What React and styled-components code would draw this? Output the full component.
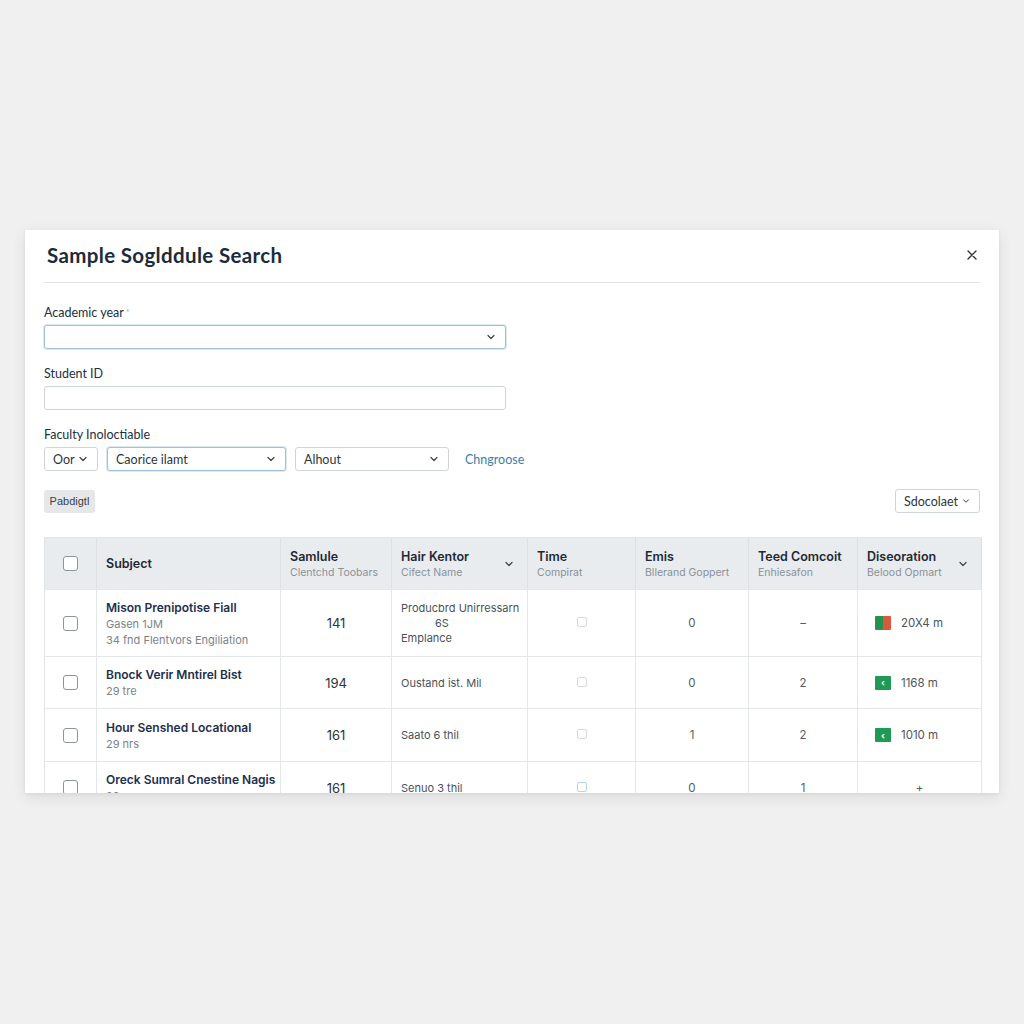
import React from 'react';
import styled, { createGlobalStyle } from 'styled-components';

const GlobalStyle = createGlobalStyle`
  html, body {
    margin: 0;
    padding: 0;
    background: #eff0ef;
  }
  body {
    font-family: Lato, "Open Sans", sans-serif;
    color: #1f2a37;
  }
`;

const Page = styled.div`
  width: 1024px;
  height: 1024px;
  padding: 230px 0 0 25px;
  box-sizing: border-box;
`;

const Card = styled.div`
  width: 974px;
  height: 563px;
  background: #fff;
  box-shadow: 0 4px 14px rgba(0, 0, 0, 0.09), 0 1px 3px rgba(0, 0, 0, 0.06);
  overflow: hidden;
  padding: 0 19px;
  box-sizing: border-box;
`;

const Header = styled.div`
  height: 52px;
  display: flex;
  align-items: center;
  justify-content: space-between;
  border-bottom: 1px solid #e3e6e8;
`;

const Title = styled.h1`
  margin: -2px 0 0 3px;
  font-size: 20.5px;
  font-weight: 700;
  color: #1c2b3b;
  letter-spacing: 0.35px;
`;

const Close = styled.button`
  border: none;
  background: none;
  padding: 0;
  margin: -2px 2px 0 0;
  display: flex;
  color: #333;
`;

const Form = styled.div`
  display: flex;
  flex-direction: column;
  padding-top: 22px;
`;

const Field = styled.div`
  display: flex;
  flex-direction: column;
  gap: 4px;
  margin-bottom: 17px;
`;

const Label = styled.label`
  font-size: 12.5px;
  line-height: 16px;
  color: #22303e;
`;

const Req = styled.span`
  color: #8fb5d3;
  font-size: 9px;
  vertical-align: top;
  margin-left: 2px;
`;

const Box = styled.div`
  width: ${p => p.$w}px;
  height: 24px;
  box-sizing: border-box;
  border: 1px solid ${p => (p.$focus ? '#9fc0d8' : '#cfd4d8')};
  box-shadow: ${p => (p.$focus ? '0 0 0 1px rgba(159,192,216,0.35)' : 'none')};
  border-radius: 3px;
  background: #fff;
  display: flex;
  align-items: center;
  justify-content: space-between;
  padding: 0 8px 0 8px;
  font-size: 12.5px;
  color: #2c3640;
`;

const Row = styled.div`
  display: flex;
  align-items: center;
  gap: 9px;
`;

const Link = styled.a`
  margin-left: 7px;
  color: #3c7ea6;
  font-size: 12.5px;
`;

const Toolbar = styled.div`
  display: flex;
  justify-content: space-between;
  align-items: center;
  margin-top: 1px;
  margin-bottom: 24px;
`;

const GrayButton = styled.button`
  height: 23px;
  width: 51px;
  border: none;
  border-radius: 3px;
  background: #e5e7e9;
  font-family: "Liberation Sans", sans-serif;
  font-size: 11px;
  color: #39424a;
  padding: 0;
`;

const Table = styled.div`
  width: 937px;
  border: 1px solid #e2e5e8;
  border-right: none;
  display: grid;
  grid-template-columns: 52px 184px 111px 136px 108px 113px 109px 124px;
  font-family: Inter, "Liberation Sans", sans-serif;
`;

const Th = styled.div`
  height: 51px;
  box-sizing: border-box;
  background: #e9ecef;
  border-right: 1px solid #dde1e5;
  display: flex;
  align-items: center;
  justify-content: ${p => (p.$center ? 'center' : 'space-between')};
  padding: 0 ${p => (p.$center ? 0 : 12)}px 0 ${p => (p.$center ? 0 : 9)}px;
`;

const ThText = styled.div`
  display: flex;
  flex-direction: column;
  gap: 2px;
`;

const ThMain = styled.span`
  font-size: 12.5px;
  font-weight: 600;
  color: #1f2833;
`;

const ThSub = styled.span`
  font-size: 10.5px;
  color: #8a9198;
`;

const Td = styled.div`
  height: ${p => p.$h}px;
  box-sizing: border-box;
  border-top: 1px solid #e4e7ea;
  border-right: 1px solid #e4e7ea;
  display: flex;
  align-items: center;
  justify-content: ${p => (p.$align === 'left' ? 'flex-start' : 'center')};
  padding-left: ${p => (p.$align === 'left' ? 9 : 0)}px;
  font-size: 12px;
  color: #3d454d;
`;

const Check = styled.span`
  width: 15px;
  height: 15px;
  box-sizing: border-box;
  border: 1.5px solid #8d949b;
  border-radius: 3px;
  background: #fff;
  display: inline-block;
`;

const MiniCheck = styled.span`
  width: 10px;
  height: 10px;
  box-sizing: border-box;
  border: 1px solid ${p => (p.$blue ? '#b5d3ea' : '#d5d9dd')};
  border-radius: 2px;
  display: inline-block;
  margin-top: -2px;
`;

const SubjectCell = styled.div`
  display: flex;
  flex-direction: column;
  gap: 2px;
`;

const SubjectTitle = styled.span`
  font-size: 12px;
  font-weight: 600;
  color: #1e3050;
`;

const SubjectSub = styled.span`
  font-size: 11px;
  color: #7b838b;
`;

const Multi = styled.div`
  display: flex;
  flex-direction: column;
  gap: 1px;
  font-size: 11px;
  color: #4a5259;
  line-height: 14px;
`;

const Indent = styled.span`
  padding-left: 34px;
`;

const Number = styled.span`
  font-size: ${p => (p.$big ? 13 : 11.5)}px;
  color: ${p => (p.$big ? '#2c3338' : '#555c63')};
`;

const Distance = styled.div`
  display: flex;
  align-items: center;
  gap: 10px;
  padding-left: 8px;
  font-size: 11.5px;
  color: #4d555c;
`;

const Badge = styled.span`
  width: 16px;
  height: 14px;
  border-radius: 1px;
  display: inline-flex;
  align-items: center;
  justify-content: center;
  background: ${p =>
    p.$mixed ? 'linear-gradient(90deg, #23934f 50%, #d9583e 50%)' : '#1f9a54'};
  color: #fff;
  font-size: 9px;
  font-weight: 700;
  line-height: 1;
`;

const Chevron = ({ size = 12 }) => (
  <svg width={size} height={size} viewBox="0 0 24 24" fill="none" stroke="#3a434c" strokeWidth="2.4" strokeLinecap="round" strokeLinejoin="round">
    <path d="M6 9l6 6 6-6" />
  </svg>
);

const columns = [
  { main: 'Samlule', sub: 'Clentchd Toobars' },
  { main: 'Hair Kentor', sub: 'Cifect Name', chevron: true },
  { main: 'Time', sub: 'Compirat' },
  { main: 'Emis', sub: 'Bllerand Goppert' },
  { main: 'Teed Comcoit', sub: 'Enhiesafon' },
  { main: 'Diseoration', sub: 'Belood Opmart', chevron: true },
];

const rows = [
  {
    h: 67,
    title: 'Mison Prenipotise Fiall',
    subs: ['Gasen 1JM', '34 fnd Flentvors Engiliation'],
    sample: '141',
    kentor: ['Producbrd Unirressarn', '6S', 'Emplance'],
    emis: '0',
    teed: '–',
    badge: 'mixed',
    dist: '20X4 m',
  },
  {
    h: 52,
    title: 'Bnock Verir Mntirel Bist',
    subs: ['29 tre'],
    sample: '194',
    kentor: ['Oustand ist. Mil'],
    emis: '0',
    teed: '2',
    badge: 'green',
    dist: '1168 m',
  },
  {
    h: 53,
    title: 'Hour Senshed Locational',
    subs: ['29 nrs'],
    sample: '161',
    kentor: ['Saato 6 thil'],
    emis: '1',
    teed: '2',
    badge: 'green',
    dist: '1010 m',
  },
  {
    h: 52,
    title: 'Oreck Sumral Cnestine Nagis',
    subs: ['29 nrs'],
    sample: '161',
    kentor: ['Senuo 3 thil'],
    emis: '0',
    teed: '1',
    plus: true,
    blue: true,
  },
];

export default function App() {
  return (
    <>
      <GlobalStyle />
      <Page>
        <Card>
          <Header>
            <Title>Sample Soglddule Search</Title>
            <Close aria-label="Close">
              <svg width="12" height="12" viewBox="0 0 12 12" stroke="#333" strokeWidth="1.4" strokeLinecap="round">
                <path d="M2 2l8 8M10 2l-8 8" />
              </svg>
            </Close>
          </Header>

          <Form>
            <Field>
              <Label>
                Academic year<Req>*</Req>
              </Label>
              <Box $w={462} $focus>
                <span />
                <Chevron />
              </Box>
            </Field>

            <Field>
              <Label>Student ID</Label>
              <Box $w={462} />
            </Field>

            <Field>
              <Label>Faculty Inoloctiable</Label>
              <Row>
                <Box $w={54}>
                  Oor <Chevron />
                </Box>
                <Box $w={179} $focus>
                  Caorice ilamt <Chevron />
                </Box>
                <Box $w={154}>
                  Alhout <Chevron />
                </Box>
                <Link>Chngroose</Link>
              </Row>
            </Field>

            <Toolbar>
              <GrayButton>Pabdigtl</GrayButton>
              <Box $w={85}>
                Sdocolaet <Chevron size={10} />
              </Box>
            </Toolbar>

            <Table>
              <Th $center>
                <Check />
              </Th>
              <Th>
                <ThMain>Subject</ThMain>
              </Th>
              {columns.map(c => (
                <Th key={c.main}>
                  <ThText>
                    <ThMain>{c.main}</ThMain>
                    <ThSub>{c.sub}</ThSub>
                  </ThText>
                  {c.chevron && <Chevron />}
                </Th>
              ))}

              {rows.map(r => (
                <React.Fragment key={r.title}>
                  <Td $h={r.h}>
                    <Check />
                  </Td>
                  <Td $h={r.h} $align="left">
                    <SubjectCell>
                      <SubjectTitle>{r.title}</SubjectTitle>
                      {r.subs.map(s => (
                        <SubjectSub key={s}>{s}</SubjectSub>
                      ))}
                    </SubjectCell>
                  </Td>
                  <Td $h={r.h}>
                    <Number $big>{r.sample}</Number>
                  </Td>
                  <Td $h={r.h} $align="left">
                    <Multi>
                      {r.kentor.map((k, i) =>
                        i === 1 && r.kentor.length === 3 ? <Indent key={k}>{k}</Indent> : <span key={k}>{k}</span>
                      )}
                    </Multi>
                  </Td>
                  <Td $h={r.h}>
                    <MiniCheck $blue={r.blue} />
                  </Td>
                  <Td $h={r.h}>
                    <Number>{r.emis}</Number>
                  </Td>
                  <Td $h={r.h}>
                    <Number>{r.teed}</Number>
                  </Td>
                  <Td $h={r.h} $align={r.plus ? 'center' : 'left'}>
                    {r.plus ? (
                      <Number>+</Number>
                    ) : (
                      <Distance>
                        <Badge $mixed={r.badge === 'mixed'}>{r.badge === 'mixed' ? '' : '‹'}</Badge>
                        {r.dist}
                      </Distance>
                    )}
                  </Td>
                </React.Fragment>
              ))}
            </Table>
          </Form>
        </Card>
      </Page>
    </>
  );
}
